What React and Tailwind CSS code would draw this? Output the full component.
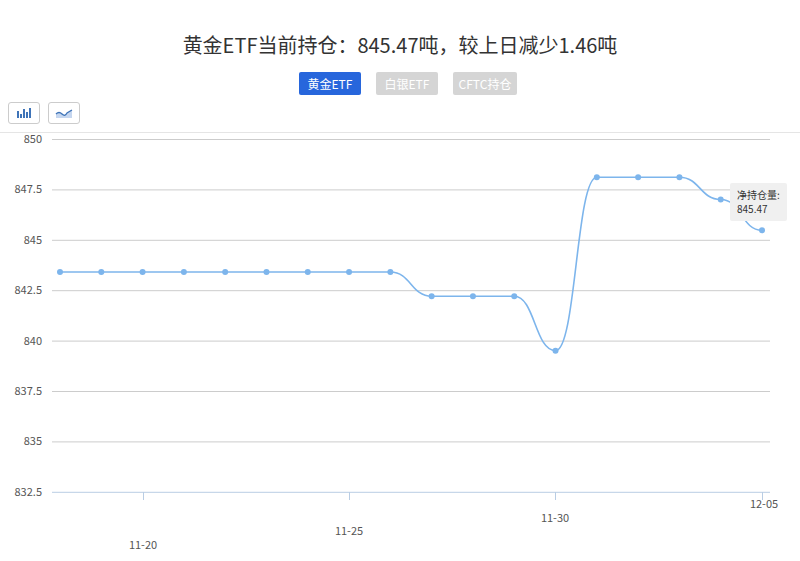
export default function App() {
  const vals = [843.4,843.4,843.4,843.4,843.4,843.4,843.4,843.4,843.4,842.2,842.2,842.2,839.5,848.1,848.1,848.1,847,845.47];
  const xs = vals.map((_, i) => 60 + i * (702 / 17));
  const yOf = v => 139 + (850 - v) / 2.5 * 50.4;
  const pts = vals.map((v, i) => [xs[i], yOf(v)]);
  let d = `M${pts[0][0]},${pts[0][1]}`;
  for (let i = 1; i < pts.length; i++) {
    const [x0, y0] = pts[i - 1], [x1, y1] = pts[i];
    const dx = (x1 - x0) / 2;
    d += ` C${x0 + dx},${y0} ${x1 - dx},${y1} ${x1},${y1}`;
  }
  const grid = [850, 847.5, 845, 842.5, 840, 837.5, 835, 832.5];
  const font = { fontFamily: '"Noto Sans CJK SC", "Liberation Sans", sans-serif' };
  return (
    <div className="relative w-[800px] h-[561px] bg-white overflow-hidden" style={font}>
      <div className="pt-[30px] text-center text-[20px] leading-[30px] text-[#333]">黄金ETF当前持仓：845.47吨，较上日减少1.46吨</div>
      <div className="mt-[12px] flex justify-center gap-[15px] pl-[16px]">
        <div className="w-[62px] h-[23px] rounded-[2px] bg-[#2766dc] text-white text-[12px] leading-[23px] text-center">黄金ETF</div>
        <div className="w-[62px] h-[23px] rounded-[2px] bg-[#d5d5d5] text-white text-[12px] leading-[23px] text-center">白银ETF</div>
        <div className="w-[64px] h-[23px] rounded-[2px] bg-[#d5d5d5] text-white text-[12px] leading-[23px] text-center">CFTC持仓</div>
      </div>
      <div className="mt-[7px] ml-[8px] flex gap-[8px]">
        <div className="w-[32px] h-[22px] border border-[#ccc] rounded-[3px] flex items-center justify-center">
          <svg width="16" height="10" viewBox="0 0 16 10"><g fill="#3f74b8"><rect x="1" y="3" width="2" height="7"/><rect x="4" y="6" width="2" height="4"/><rect x="7" y="1" width="2" height="9"/><rect x="10" y="4" width="2" height="6"/><rect x="13" y="0" width="2" height="10"/></g></svg>
        </div>
        <div className="w-[32px] h-[22px] border border-[#ccc] rounded-[3px] flex items-center justify-center">
          <svg width="18" height="10" viewBox="0 0 18 10"><path d="M1 6 Q4 3 7 6 T12 5 L17 2 L17 10 L1 10Z" fill="#c5d6ef"/><path d="M1 6 Q4 3 7 6 T12 5 L17 2" fill="none" stroke="#3f74b8" strokeWidth="1.3"/></svg>
        </div>
      </div>
      <div className="mt-[8px] h-px bg-[#e5e5e5]" />
      <svg className="absolute left-0 top-0" width="800" height="561">
        {grid.map(g => (
          <g key={g}>
            <line x1="52" x2="770" y1={yOf(g) + 0.5} y2={yOf(g) + 0.5} stroke={g === 832.5 ? "#b9cde4" : "#ccc"} />
            <text x="42" y={yOf(g) + 4} fontSize="11" fill="#555" textAnchor="end">{g}</text>
          </g>
        ))}
        {[143, 349, 555, 762].map(x => <line key={x} x1={x + 0.5} x2={x + 0.5} y1="492" y2="500" stroke="#b9cde4" />)}
        <g fontSize="11" fill="#555" textAnchor="middle">
          <text x="143" y="549">11-20</text>
          <text x="349" y="535">11-25</text>
          <text x="555" y="522">11-30</text>
          <text x="764" y="508">12-05</text>
        </g>
        <path d={d} fill="none" stroke="#7db5ec" strokeWidth="1.6" />
        {pts.map(([x, y], i) => <circle key={i} cx={x} cy={y} r="3" fill="#7db5ec" />)}
      </svg>
      <div className="absolute left-[730px] top-[183px] w-[57px] h-[38px] bg-[#f0f0f0] rounded-[2px] px-[7px] pt-[5px] text-[10px] leading-[14px] text-[#333]">
        <div>净持仓量:</div>
        <div>845.47</div>
      </div>
    </div>
  );
}
